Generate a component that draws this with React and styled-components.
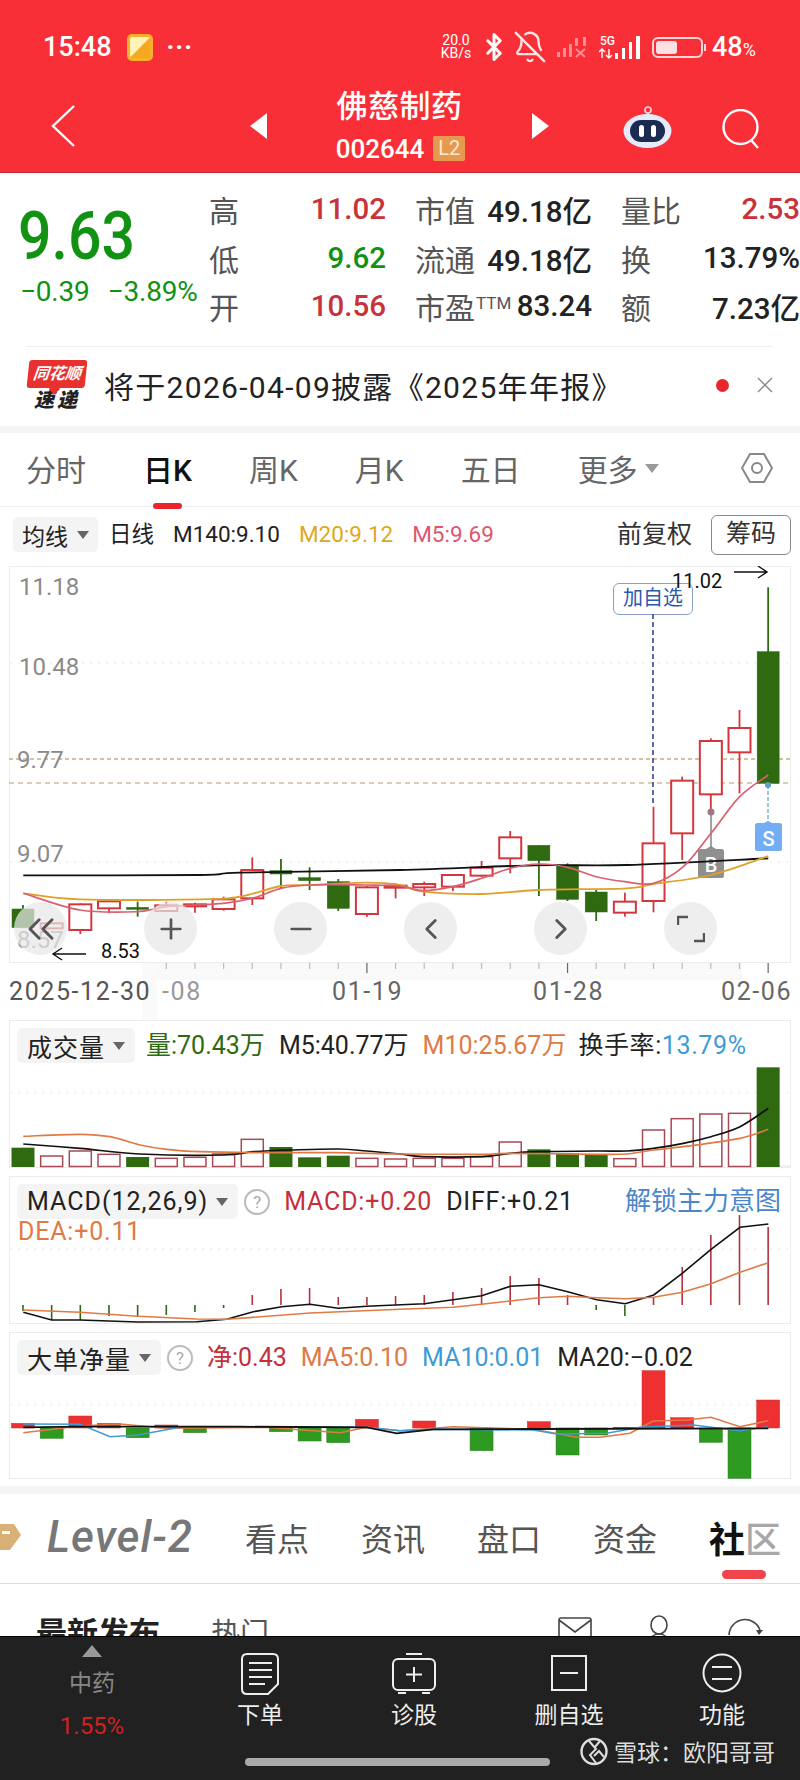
import React from "react";
import styled, { createGlobalStyle } from "styled-components";
import { Bluetooth, BellOff, Plus, Minus, ChevronLeft, ChevronRight, ChevronsLeft } from "lucide-react";

const Global = createGlobalStyle`
  html, body { margin: 0; padding: 0; background: #fff; }
  body { font-family: Roboto, "Noto Sans CJK SC", sans-serif; color: #222; }
`;

const Page = styled.div`
  position: relative;
  width: 800px;
  height: 1780px;
  overflow: hidden;
  display: flex;
  flex-direction: column;
`;

/* header */
const Header = styled.header`
  height: 173px;
  box-sizing: border-box;
  background: #f92f37;
  border-bottom: 1px solid #c9262d;
  color: #fff;
  flex: none;
`;
const StatusBar = styled.div`
  height: 80px;
  box-sizing: border-box;
  padding: 14px 42px 0 43px;
  display: flex;
  align-items: center;
  gap: 9px;
`;
const Clock = styled.span`
  font-size: 27px;
  font-weight: 500;
  margin-right: 6px;
`;
const AppIcon = styled.span`
  width: 26px;
  height: 27px;
  border-radius: 5px;
  background: linear-gradient(135deg, #fff3b8 0 48%, #f6a81e 52%);
  border: 3px solid #f8b02a;
  box-sizing: border-box;
`;
const MoreDots = styled.span`
  margin-left: 5px;
  font-size: 26px;
  font-weight: 700;
  letter-spacing: 1px;
  margin-right: auto;
`;
const NetSpeed = styled.span`
  width: 34px;
  font-size: 14px;
  line-height: 13px;
  text-align: center;
  margin-right: 2px;
`;
const BluetoothMark = styled(Bluetooth)`
  margin: 0 -5px;
`;
const Battery = styled.span`
  width: 51px;
  height: 21px;
  box-sizing: border-box;
  border: 2px solid #ffd6d8;
  border-radius: 6px;
  padding: 2px;
  display: flex;
  position: relative;
  &::after {
    content: "";
    position: absolute;
    right: -5px;
    top: 5px;
    width: 2px;
    height: 7px;
    background: #ffd6d8;
  }
`;
const BatteryFill = styled.span`
  width: 48%;
  background: #fde0e2;
  border-radius: 3px;
`;
const Percent = styled.span`
  font-size: 27px;
  font-weight: 500;
  width: 46px;
  white-space: nowrap;
  small { font-size: 18px; font-weight: 400; }
`;
const NavBar = styled.div`
  height: 92px;
  padding-left: 51px;
  display: flex;
  align-items: center;
`;
const Arrow = styled.span`
  width: 0;
  height: 0;
  border-top: 13px solid transparent;
  border-bottom: 13px solid transparent;
  border-${({ $dir }) => ($dir === "left" ? "right" : "left")}: 17px solid #fff;
  margin-left: ${({ $dir }) => ($dir === "left" ? "175px" : "0")};
`;
const TitleBlock = styled.div`
  width: 265px;
  display: flex;
  flex-direction: column;
  align-items: center;
  gap: 10px;
  margin-top: -3px;
`;
const StockName = styled.div`
  font-size: 31px;
  line-height: 38px;
  font-weight: 500;
  letter-spacing: 0.5px;
`;
const CodeRow = styled.div`
  display: flex;
  align-items: center;
  gap: 9px;
  font-size: 26px;
  font-weight: 500;
  line-height: 26px;
  margin-left: 2px;
`;
const Level = styled.span`
  width: 32px;
  height: 25px;
  background: #e59a50;
  border-radius: 2px;
  font-size: 20px;
  font-weight: 400;
  line-height: 25px;
  text-align: center;
  color: #ffe9cf;
`;
const Robot = styled.svg`
  width: 49px;
  height: 44px;
  margin-left: 74px;
`;
const SearchIcon = styled.svg`
  width: 40px;
  height: 40px;
  margin-left: 50px;
  margin-top: 6px;
`;

/* quote */
const Quote = styled.section`
  height: 173px;
  box-sizing: border-box;
  padding: 12px 0 0 20px;
  display: flex;
  flex: none;
`;
const PriceBlock = styled.div`
  width: 189px;
  padding-top: 21px;
`;
const BigPrice = styled.div`
  font-size: 59px;
  line-height: 62px;
  font-weight: 500;
  color: #119212;
  margin-left: -2px;
  transform: scaleY(1.12);
  transform-origin: left center;
`;
const Change = styled.div`
  margin-top: 11px;
  display: flex;
  gap: 18px;
  font-size: 28px;
  line-height: 26px;
  color: #119212;
  white-space: nowrap;
  letter-spacing: -0.2px;
`;
const StatGrid = styled.div`
  display: grid;
  grid-template-columns: 177px 177px 179px;
  grid-auto-rows: 48.5px;
  column-gap: 29px;
`;
const Stat = styled.div`
  display: flex;
  justify-content: space-between;
  align-items: center;
`;
const StatLabel = styled.span`
  font-size: 30px;
  color: #555;
  white-space: nowrap;
  sup { font-size: 17px; vertical-align: 10px; line-height: 0; margin-left: 1px; }
`;
const StatValue = styled.span`
  font-size: 29.5px;
  font-weight: 500;
  white-space: nowrap;
  color: ${({ $tone }) => ($tone === "up" ? "#c8323a" : $tone === "down" ? "#119212" : "#222")};
`;

/* news */
const News = styled.section`
  height: 80px;
  box-sizing: border-box;
  margin: 0 27px 0 26px;
  padding: 0 0 3px 2px;
  border-top: 1px solid #eeeeee;
  display: flex;
  align-items: center;
  flex: none;
`;
const NewsLogo = styled.div`
  width: 58px;
  display: flex;
  flex-direction: column;
  align-items: center;
`;
const LogoTag = styled.span`
  width: 58px;
  height: 28px;
  background: #e8312e;
  border-radius: 3px;
  transform: skewX(-6deg);
  color: #fff;
  font-size: 16px;
  line-height: 28px;
  font-weight: 700;
  font-style: italic;
  text-align: center;
  white-space: nowrap;
  position: relative;
  &::after {
    content: "";
    position: absolute;
    left: 24px;
    bottom: -5px;
    width: 8px;
    height: 8px;
    background: #e8312e;
    transform: rotate(45deg);
  }
`;
const LogoSub = styled.span`
  margin-top: 1px;
  font-size: 20px;
  line-height: 22px;
  font-weight: 900;
  font-style: italic;
  color: #222;
  letter-spacing: 3px;
`;
const NewsText = styled.span`
  margin-left: 18px;
  font-size: 30px;
  white-space: nowrap;
  color: #222;
  letter-spacing: 1.3px;
`;
const RedDot = styled.span`
  margin-left: auto;
  width: 13px;
  height: 13px;
  border-radius: 50%;
  background: #e8262e;
`;
const CloseMark = styled.svg`
  width: 16px;
  height: 16px;
  margin-left: 28px;
`;
const GreyGap = styled.div`
  flex: none;
  height: ${({ $h }) => $h}px;
  margin-top: ${({ $mt = 0 }) => $mt}px;
  background: #f5f5f5;
`;

/* period tabs */
const Periods = styled.nav`
  flex: none;
  height: 74px;
  box-sizing: border-box;
  padding: 0 27px 3px 26px;
  border-bottom: 1px solid #eeeeee;
  display: flex;
  align-items: center;
  gap: 57px;
`;
const Period = styled.span`
  position: relative;
  display: flex;
  align-items: center;
  gap: 7px;
  font-size: 30px;
  white-space: nowrap;
  color: ${({ $active }) => ($active ? "#111" : "#666")};
  font-weight: ${({ $active }) => ($active ? 500 : 400)};
  &::after {
    content: "";
    display: ${({ $active }) => ($active ? "block" : "none")};
    position: absolute;
    left: 10px;
    right: 10px;
    bottom: -19px;
    height: 6px;
    border-radius: 3px;
    background: #e8262e;
  }
`;
const Tri = styled.span`
  display: inline-block;
  width: 0;
  height: 0;
  border-left: ${({ $w = 6 }) => $w}px solid transparent;
  border-right: ${({ $w = 6 }) => $w}px solid transparent;
  border-top: ${({ $w = 6 }) => $w + 2}px solid ${({ $c = "#666" }) => $c};
  flex: none;
`;
const HexIcon = styled.svg`
  width: 32px;
  height: 32px;
  margin-left: auto;
`;

/* k-line */
const LegendRow = styled.div`
  flex: none;
  height: 59px;
  box-sizing: border-box;
  padding: 10px 9px 0 13px;
  display: flex;
  align-items: flex-start;
  gap: 19px;
`;
const Chip = styled.span`
  display: inline-flex;
  align-items: center;
  gap: ${({ $small }) => ($small ? 9 : 8)}px;
  height: 35px;
  padding: 0 ${({ $small }) => ($small ? 9 : 10)}px;
  box-sizing: border-box;
  background: #f5f4f4;
  border-radius: 5px;
  font-size: ${({ $small }) => ($small ? 23 : 25)}px;
  letter-spacing: ${({ $small }) => ($small ? 0 : 1)}px;
  color: #222;
  white-space: nowrap;
  flex: none;
`;
const Item = styled.span`
  font-size: 22.5px;
  line-height: 35px;
  color: ${({ $c = "#222" }) => $c};
  white-space: nowrap;
  margin-left: ${({ $ml = 0 }) => $ml}px;
`;
const Adjust = styled.span`
  margin-left: auto;
  font-size: 25px;
  line-height: 35px;
  color: #333;
`;
const ChipsButton = styled.span`
  width: 80px;
  height: 40px;
  margin-top: -2px;
  box-sizing: border-box;
  border: 1px solid #888;
  border-radius: 6px;
  font-size: 25px;
  line-height: 36px;
  text-align: center;
  color: #333;
`;
const ChartFrame = styled.div`
  flex: none;
  position: relative;
  box-sizing: border-box;
  margin: ${({ $mt = 0 }) => $mt}px 9px 0;
  width: 782px;
  height: ${({ $h }) => $h}px;
  border: 1px solid #ececec;
`;
const ChartLayer = styled.div`
  position: absolute;
  left: -1px;
  top: -1px;
`;
const AddTag = styled.span`
  position: absolute;
  left: 603px;
  top: 16px;
  width: 80px;
  height: 32px;
  box-sizing: border-box;
  background: #fff;
  border: 1px solid #8ba0c8;
  border-radius: 6px;
  font-size: 20px;
  line-height: 29px;
  text-align: center;
  color: #2a5ab0;
`;
const ToolRow = styled.div`
  position: absolute;
  left: 4px;
  top: 335px;
  display: flex;
  gap: 77px;
`;
const RoundTool = styled.span`
  width: 53px;
  height: 53px;
  border-radius: 50%;
  background: rgba(232, 232, 232, 0.72);
  display: flex;
  align-items: center;
  justify-content: center;
  color: #555;
`;
const AxisRow = styled.svg`
  flex: none;
  display: block;
`;
const PanelHead = styled.div`
  position: relative;
  display: flex;
  align-items: center;
  gap: 14px;
  padding: 7px 9px 0 7px;
`;
const Help = styled.span`
  width: 26px;
  height: 26px;
  box-sizing: border-box;
  border: 2px solid #bbb;
  border-radius: 50%;
  font-size: 17px;
  line-height: 22px;
  text-align: center;
  color: #aaa;
  flex: none;
  margin-left: -8px;
`;
const PanelItem = styled.span`
  font-size: 25px;
  line-height: 35px;
  white-space: nowrap;
  letter-spacing: ${({ $ls = 0 }) => $ls}px;
  color: ${({ $c = "#222" }) => $c};
  margin-left: ${({ $ml = 0 }) => $ml}px;
`;
const Accent = styled.span`
  color: #3d9bd8;
`;
const UnlockLink = styled.span`
  margin-left: auto;
  font-size: 26px;
  line-height: 35px;
  white-space: nowrap;
  color: #4a86c8;
`;
const SecondLine = styled.div`
  position: relative;
  padding-left: 8px;
  font-size: 25px;
  line-height: 26px;
  letter-spacing: 0.8px;
  color: #e07a45;
`;

/* info tabs */
const InfoTabs = styled.nav`
  flex: none;
  height: 90px;
  box-sizing: border-box;
  border-bottom: 1px solid #ddd;
  display: flex;
  align-items: center;
  gap: 52px;
  padding-bottom: 3px;
`;
const Gem = styled.svg`
  width: 21px;
  height: 26px;
  margin-right: -26px;
  flex: none;
`;
const LevelLogo = styled.span`
  font-size: 44px;
  line-height: 50px;
  font-style: italic;
  font-weight: 500;
  color: #777;
  white-space: nowrap;
  letter-spacing: 1px;
`;
const InfoTab = styled.span`
  font-size: 32px;
  color: #555;
  white-space: nowrap;
`;
const InfoActive = styled.span`
  position: relative;
  font-size: 36px;
  font-weight: 700;
  color: #111;
  white-space: nowrap;
  em { font-style: normal; font-weight: 500; color: #a8a8a8; }
  &::after {
    content: "";
    position: absolute;
    left: 13px;
    width: 44px;
    height: 9px;
    bottom: -16px;
    border-radius: 5px;
    background: #f0454c;
  }
`;
const Feed = styled.div`
  flex: none;
  height: 52px;
  overflow: hidden;
  padding: 32px 37px 0 36px;
  box-sizing: border-box;
  display: flex;
  align-items: flex-start;
`;
const FeedMain = styled.span`
  font-size: 31px;
  font-weight: 700;
  line-height: 36px;
  color: #222;
  white-space: nowrap;
`;
const FeedChevron = styled.svg`
  width: 16px;
  height: 10px;
  margin: 20px 0 0 7px;
  flex: none;
`;
const FeedSub = styled.span`
  font-size: 29px;
  line-height: 36px;
  color: #555;
  margin-left: 28px;
  margin-right: auto;
`;
const FeedIcon = styled.svg`
  width: ${({ $w }) => $w}px;
  height: 36px;
  margin-left: ${({ $ml }) => $ml}px;
  margin-top: ${({ $mt = 0 }) => $mt}px;
  flex: none;
`;

/* bottom bar */
const Dock = styled.footer`
  position: relative;
  flex: 1;
  background: #212121;
  border-top: 1px solid #000;
  box-sizing: border-box;
  display: grid;
  grid-template-columns: 184px 152px 156px 154px 152px;
  align-items: start;
`;
const SectorCell = styled.div`
  display: flex;
  flex-direction: column;
  align-items: center;
  padding-top: 8px;
`;
const UpTri = styled.span`
  width: 0;
  height: 0;
  border-left: 10px solid transparent;
  border-right: 10px solid transparent;
  border-bottom: 12px solid #999;
`;
const SectorName = styled.span`
  margin-top: 13px;
  font-size: 23px;
  line-height: 28px;
  color: #888;
`;
const SectorPct = styled.span`
  margin-top: 14px;
  font-size: 24px;
  line-height: 28px;
  color: #d02020;
`;
const DockItem = styled.div`
  display: flex;
  flex-direction: column;
  align-items: center;
  padding-top: 16px;
  color: #eee;
`;
const DockLabel = styled.span`
  margin-top: 8px;
  font-size: 23px;
  line-height: 26px;
  color: #eee;
  white-space: nowrap;
`;
const HomeBar = styled.span`
  position: absolute;
  left: 245px;
  bottom: 14px;
  width: 305px;
  height: 8px;
  border-radius: 4px;
  background: #aaa;
`;
const Watermark = styled.div`
  position: absolute;
  left: 580px;
  bottom: 12px;
  display: flex;
  align-items: center;
  gap: 6px;
  font-size: 23px;
  color: #ddd;
  white-space: nowrap;
`;

/* data: coordinates were read off the reference, in page pixels */
const cx = (i) => 23 + i * 28.66;
const zy = (z) => 510 + z / 3;

const candles = [
  ["g", 1185, 1197, 1253, 1253], ["r", 1240, 1240, 1255, 1255], ["r", 1180, 1183, 1260, 1272],
  ["r", 1168, 1174, 1195, 1210], ["g", 1175, 1192, 1198, 1220], ["r", 1175, 1186, 1203, 1205],
  ["r", 1178, 1183, 1187, 1208], ["r", 1160, 1168, 1197, 1202], ["r", 1042, 1080, 1165, 1185],
  ["g", 1047, 1082, 1092, 1135], ["g", 1072, 1103, 1112, 1140], ["g", 1107, 1115, 1195, 1203],
  ["r", 1128, 1132, 1212, 1220], ["r", 1120, 1127, 1133, 1165], ["r", 1115, 1122, 1132, 1158],
  ["r", 1095, 1095, 1130, 1143], ["r", 1053, 1073, 1097, 1100], ["r", 963, 982, 1045, 1090],
  ["g", 1006, 1006, 1052, 1158], ["g", 1060, 1068, 1168, 1173], ["g", 1140, 1146, 1206, 1233],
  ["r", 1148, 1175, 1208, 1220], ["r", 890, 1000, 1173, 1207], ["r", 800, 812, 970, 1050],
  ["r", 685, 693, 853, 900], ["r", 600, 654, 727, 850], ["g", 232, 425, 820, 820],
];

const L = (list) => list.map(([x, z]) => [x / 3, zy(z)]);
const R = (list) => list.map(([x, z]) => [400 + x / 3, zy(z)]);

const m140 = [...L([[70, 1096], [600, 1095], [720, 1088], [1200, 1080]]), ...R([[400, 1066], [680, 1065], [1105, 1045]])];
const m20 = [
  ...L([[70, 1150], [240, 1168], [600, 1168], [720, 1160], [843, 1128], [929, 1125], [1100, 1118]]),
  ...R([[0, 1125], [70, 1145], [245, 1152], [417, 1140], [680, 1135], [760, 1122], [933, 1095], [1105, 1038]]),
];
const m5 = [
  ...L([[70, 1150], [240, 1200], [413, 1205], [500, 1190], [671, 1180], [757, 1165], [843, 1135], [929, 1125], [1100, 1125]]),
  ...R([[0, 1128], [70, 1142], [159, 1130], [245, 1105], [331, 1075], [417, 1062], [503, 1072], [589, 1100], [675, 1115], [761, 1120], [850, 1070], [933, 970], [1019, 860], [1105, 795]]),
];

const volume = [
  ["g", 413], ["r", 438], ["r", 423], ["r", 433], ["g", 441], ["r", 445], ["r", 442], ["r", 432], ["r", 388],
  ["g", 411], ["g", 442], ["g", 437], ["r", 445], ["r", 447], ["r", 445], ["r", 445], ["r", 440], ["r", 396],
  ["g", 418], ["g", 430], ["g", 432], ["r", 446], ["r", 360], ["r", 326], ["r", 312], ["r", 310], ["g", 172],
];
const vol = (off, list) => list.map(([x, z]) => [off + x / 3, 1010 + z / 3]);
const volBlack = [
  ...vol(0, [[70, 402], [240, 415], [420, 432], [670, 435], [760, 425], [870, 420], [1015, 417], [1100, 423]]),
  ...vol(400, [[0, 432], [70, 440], [245, 440], [330, 430], [417, 425], [590, 423], [680, 423], [760, 415], [850, 400], [933, 380], [1020, 350], [1105, 295]]),
];
const volOrange = [
  ...vol(0, [[70, 379], [240, 373], [330, 380], [420, 405], [500, 418], [600, 425], [760, 428], [1000, 428]]),
  ...vol(400, [[0, 432], [245, 433], [330, 430], [590, 433], [680, 432], [760, 420], [850, 410], [1020, 385], [1105, 358]]),
];

const macdTops = [
  1311, 1320, 1320, 1316, 1317, 1315, 1312, 1308, 1295, 1289, 1288, 1297, 1297, 1296, 1295, 1292, 1288, 1276,
  1278, 1295, 1310, 1316, 1297, 1267, 1235, 1215, 1227,
];
const macd = (list, off, base) => list.map(([x, z]) => [off + x / 3, base + z / 3]);
const diffLine = [
  ...macd([[70, 217], [155, 240], [240, 240], [413, 246], [590, 245], [680, 238], [760, 215], [845, 200], [930, 193], [1015, 205], [1100, 199]], 0, 1240),
  ...macd([[73, 281], [159, 269], [245, 257], [331, 229], [417, 224], [503, 245], [590, 269], [676, 281], [761, 255], [847, 190], [933, 118], [1020, 52], [1105, 42]], 400, 1210),
];
const deaLine = [
  ...macd([[70, 210], [240, 217], [413, 229], [590, 237], [680, 238], [930, 219]], 0, 1240),
  ...macd([[0, 298], [159, 292], [245, 283], [331, 273], [417, 263], [503, 259], [590, 263], [676, 266], [761, 262], [847, 247], [933, 221], [1020, 187], [1105, 158]], 400, 1210),
];

const flow = [
  ["r", 340], ["g", 385], ["r", 318], ["r", 340], ["g", 383], ["r", 345], ["g", 368], null, null, ["g", 365], ["g", 393], ["g", 398],
  ["r", 328], null, ["r", 333], null, ["g", 422], null, ["r", 335], ["g", 435], ["g", 375], ["r", 352], ["r", 182], ["r", 323], ["g", 397], ["g", 505], ["r", 270],
];
const fy = (z) => 1310 + z / 3;
const fl = (off, list) => list.map(([x, z]) => [off + x / 3, fy(z)]);
const flowBlack = [...fl(0, [[70, 352], [240, 350], [720, 350], [1100, 352], [1190, 370]]), ...fl(400, [[100, 358], [400, 357], [1105, 355]])];
const flowBlue = [
  ...fl(0, [[70, 342], [240, 343], [330, 380], [413, 375], [540, 352], [800, 350], [1100, 352]]),
  ...fl(400, [[0, 362], [100, 358], [400, 360], [470, 372], [620, 370], [720, 352], [880, 345], [1020, 362], [1105, 350]]),
];
const flowOrange = [
  ...fl(0, [[70, 368], [240, 348], [360, 342], [500, 355], [800, 352], [1020, 368], [1100, 352]]),
  ...fl(400, [[0, 362], [100, 355], [160, 350], [400, 358], [530, 382], [600, 382], [690, 370], [760, 333], [860, 330], [933, 322], [1020, 350], [1105, 332]]),
];

const poly = (pts) => pts.map(([x, y]) => `${x.toFixed(1)},${y.toFixed(1)}`).join(" ");
const smooth = (pts) => {
  let d = `M${pts[0][0].toFixed(1)} ${pts[0][1].toFixed(1)}`;
  for (let i = 0; i < pts.length - 1; i++) {
    const p0 = pts[i - 1] || pts[i];
    const p1 = pts[i];
    const p2 = pts[i + 1];
    const p3 = pts[i + 2] || p2;
    const c1 = [p1[0] + (p2[0] - p0[0]) / 6, p1[1] + (p2[1] - p0[1]) / 6];
    const c2 = [p2[0] - (p3[0] - p1[0]) / 6, p2[1] - (p3[1] - p1[1]) / 6];
    d += `C${c1[0].toFixed(1)} ${c1[1].toFixed(1)} ${c2[0].toFixed(1)} ${c2[1].toFixed(1)} ${p2[0].toFixed(1)} ${p2[1].toFixed(1)}`;
  }
  return d;
};

const GREEN = "#2f6a10";
const RED = "#d3363c";

const Curve = ({ pts, c, w = 1.7 }) => <path d={smooth(pts)} fill="none" stroke={c} strokeWidth={w} strokeLinejoin="round" />;
const Grid = ({ y, x2 = 790 }) => <line x1="10" x2={x2} y1={y} y2={y} stroke="#e6e6e6" strokeDasharray="2 6" />;

const MainChart = () => (
  <svg viewBox="9 566 782 397" width="782" height="397">
    <Grid y={663} />
    <Grid y={862} />
    <line x1="9" x2="790" y1="759" y2="759" stroke="#a8863e" strokeDasharray="4 3" />
    <line x1="9" x2="790" y1="783" y2="783" stroke="#b89a60" strokeDasharray="5 4" />
    <line x1="653" x2="653" y1="614" y2="806" stroke="#33488c" strokeWidth="1.6" strokeDasharray="5 3" />
    {candles.map(([k, wt, bt, bb, wb], i) => {
      const x = cx(i);
      const c = k === "g" ? GREEN : RED;
      return (
        <g key={i}>
          <line x1={x} x2={x} y1={zy(wt)} y2={zy(wb)} stroke={c} strokeWidth="1.8" />
          <rect
            x={x - 11}
            y={zy(bt)}
            width="22"
            height={Math.max(zy(bb) - zy(bt), 2)}
            fill={k === "g" ? GREEN : "#fff"}
            stroke={c}
            strokeWidth={k === "g" ? 0.5 : 2}
          />
        </g>
      );
    })}
    <line x1="711" x2="711" y1="812" y2="850" stroke="#8a8a8a" strokeWidth="1.6" />
    <circle cx="711" cy="812" r="3.5" fill="#9a7a80" />
    <path d="M698 851q0-2 3-2h5l5-3 5 3h5q3 0 3 2v25q0 2-3 2h-20q-3 0-3-2z" fill="#8f8f8f" />
    <text x="711" y="872" textAnchor="middle" fontSize="20" fontWeight="500" fill="#fff">B</text>
    <Curve pts={m140} c="#111" w={1.8} />
    <Curve pts={m20} c="#e0a02c" w={1.8} />
    <Curve pts={m5} c="#d9606f" w={1.7} />
    <line x1="768" x2="768" y1="785" y2="822" stroke="#3d8fb0" strokeWidth="1" strokeDasharray="4 2" />
    <circle cx="768" cy="785" r="3" fill="#5aa0d0" />
    <path d="M755 825q0-2 3-2h6l4-2 4 2h7q3 0 3 2v24q0 2-3 2h-21q-3 0-3-2z" fill="#73aef5" />
    <text x="768.5" y="846" textAnchor="middle" fontSize="20" fontWeight="500" fill="#fff">S</text>
    <g fontSize="24" fill="#8a8a8a">
      <text x="19" y="595">11.18</text>
      <text x="19" y="675">10.48</text>
      <text x="17" y="768">9.77</text>
      <text x="17" y="862">9.07</text>
      <text x="17" y="948">8.57</text>
    </g>
    <g fontSize="20" fill="#111">
      <text x="101" y="958">8.53</text>
      <text x="672" y="588">11.02</text>
    </g>
    <path d="M86 954H53m9-6-9 6 9 6" fill="none" stroke="#111" strokeWidth="1.4" />
    <path d="M734 572h33m-9-6 9 6-9 6" fill="none" stroke="#111" strokeWidth="1.4" />
  </svg>
);

const VolumeChart = () => (
  <svg viewBox="9 1020 782 148" width="782" height="148">
    <Grid y={1093} />
    <line x1="770" x2="790" y1="1166" y2="1166" stroke="#e4e4e4" />
    {volume.map(([k, z], i) => {
      const top = 1010 + z / 3;
      return k === "g" ? (
        <rect key={i} x={cx(i) - 11.5} y={top} width="23" height={1167 - top} fill={GREEN} />
      ) : (
        <rect key={i} x={cx(i) - 11} y={top} width="22" height={1166.5 - top} fill="#fff" stroke="#a84a55" strokeWidth="1.5" />
      );
    })}
    <Curve pts={volBlack} c="#111" />
    <Curve pts={volOrange} c="#e07a45" />
  </svg>
);

const MacdChart = () => (
  <svg viewBox="9 1176 782 148" width="782" height="148">
    <Grid y={1249} />
    {macdTops.map((t, i) => (
      <line key={i} x1={cx(i)} x2={cx(i)} y1={t} y2="1305" stroke={t > 1305 ? GREEN : "#b4323e"} strokeWidth="1.6" />
    ))}
    <polyline points={poly(diffLine)} fill="none" stroke="#111" strokeWidth="1.6" />
    <polyline points={poly(deaLine)} fill="none" stroke="#e07a45" strokeWidth="1.6" />
  </svg>
);

const FlowChart = () => (
  <svg viewBox="9 1332 782 147" width="782" height="147">
    <Grid y={1405} />
    {flow.map((b, i) => {
      if (!b) return null;
      const y = fy(b[1]);
      const top = Math.min(y, 1428);
      const h = Math.abs(y - 1428);
      return <rect key={i} x={cx(i) - 11.5} y={top} width="23" height={h} fill={b[0] === "r" ? "#ee3030" : "#2f9a20"} stroke={b[0] === "r" ? "#c03030" : "#2a7a20"} strokeWidth="0.5" />;
    })}
    <polyline points={poly(flowOrange)} fill="none" stroke="#e07a45" strokeWidth="1.6" />
    <polyline points={poly(flowBlue)} fill="none" stroke="#3d9bd8" strokeWidth="1.6" />
    <polyline points={poly(flowBlack)} fill="none" stroke="#111" strokeWidth="1.8" />
  </svg>
);

const ticks = Array.from({ length: 22 }, (_, i) => i + 5);
const longTicks = [12, 19, 26];

const App = () => (
  <Page>
    <Global />
    <Header>
      <StatusBar>
        <Clock>15:48</Clock>
        <AppIcon />
        <MoreDots>···</MoreDots>
        <NetSpeed>20.0<br />KB/s</NetSpeed>
        <BluetoothMark size={30} strokeWidth={2.4} />
        <BellOff size={34} strokeWidth={1.7} color="#ffe4e5" />
        <svg width="34" height="24" viewBox="0 0 34 24">
          <g fill="#ff8f94">
            <rect x="1" y="17" width="3" height="5" />
            <rect x="7" y="13" width="3" height="9" />
            <rect x="13" y="9" width="3" height="13" />
            <rect x="19" y="3" width="3" height="8" />
          </g>
          <path d="M20 14l9 8m0-8l-9 8" stroke="#ff8f94" strokeWidth="2" />
          <rect x="27" y="2" width="3" height="9" fill="#ff8f94" />
        </svg>
        <svg width="44" height="28" viewBox="0 0 44 28">
          <text x="1" y="12" fontSize="12" fontWeight="500" fill="#fff">5G</text>
          <path d="M3 16v9M0 19l3-3 3 3M10 25v-9M7 22l3 3 3-3" fill="none" stroke="#fff" strokeWidth="1.4" />
          <g fill="#fff">
            <rect x="16" y="20" width="3" height="6" />
            <rect x="23" y="15" width="3" height="11" />
            <rect x="30" y="9" width="3" height="17" />
            <rect x="37" y="3" width="4" height="23" />
          </g>
        </svg>
        <Battery><BatteryFill /></Battery>
        <Percent>48<small>%</small></Percent>
      </StatusBar>
      <NavBar>
        <svg width="24" height="42" viewBox="0 0 24 42">
          <path d="M23 1L2 21l21 20" fill="none" stroke="#fff" strokeWidth="2.4" />
        </svg>
        <Arrow $dir="left" />
        <TitleBlock>
          <StockName>佛慈制药</StockName>
          <CodeRow>002644<Level>L2</Level></CodeRow>
        </TitleBlock>
        <Arrow $dir="right" />
        <Robot viewBox="0 0 49 44">
          <circle cx="25" cy="6" r="3" fill="none" stroke="#f4d9e0" strokeWidth="1.6" />
          <path d="M25 9v4" stroke="#f4d9e0" strokeWidth="2" />
          <ellipse cx="24.5" cy="27" rx="24" ry="17" fill="#e6ebfa" />
          <rect x="7" y="16" width="35" height="22" rx="11" fill="#1b2b52" />
          <rect x="16" y="21" width="5" height="12" rx="2.5" fill="#fff" />
          <rect x="28" y="21" width="5" height="12" rx="2.5" fill="#fff" />
        </Robot>
        <SearchIcon viewBox="0 0 40 40">
          <circle cx="18.5" cy="18" r="17" fill="none" stroke="#fff" strokeWidth="2.4" />
          <path d="M29 31l7 8" stroke="#fff" strokeWidth="2.4" />
        </SearchIcon>
      </NavBar>
    </Header>

    <Quote>
      <PriceBlock>
        <BigPrice>9.63</BigPrice>
        <Change><span>−0.39</span><span>−3.89%</span></Change>
      </PriceBlock>
      <StatGrid>
        <Stat><StatLabel>高</StatLabel><StatValue $tone="up">11.02</StatValue></Stat>
        <Stat><StatLabel>市值</StatLabel><StatValue>49.18亿</StatValue></Stat>
        <Stat><StatLabel>量比</StatLabel><StatValue $tone="up">2.53</StatValue></Stat>
        <Stat><StatLabel>低</StatLabel><StatValue $tone="down">9.62</StatValue></Stat>
        <Stat><StatLabel>流通</StatLabel><StatValue>49.18亿</StatValue></Stat>
        <Stat><StatLabel>换</StatLabel><StatValue>13.79%</StatValue></Stat>
        <Stat><StatLabel>开</StatLabel><StatValue $tone="up">10.56</StatValue></Stat>
        <Stat><StatLabel>市盈<sup>TTM</sup></StatLabel><StatValue>83.24</StatValue></Stat>
        <Stat><StatLabel>额</StatLabel><StatValue>7.23亿</StatValue></Stat>
      </StatGrid>
    </Quote>

    <News>
      <NewsLogo>
        <LogoTag>同花顺</LogoTag>
        <LogoSub>速递</LogoSub>
      </NewsLogo>
      <NewsText>将于2026-04-09披露《2025年年报》</NewsText>
      <RedDot />
      <CloseMark viewBox="0 0 16 16">
        <path d="M1 1l14 14M15 1L1 15" stroke="#888" strokeWidth="1.4" />
      </CloseMark>
    </News>
    <GreyGap $h={7} />

    <Periods>
      <Period>分时</Period>
      <Period $active>日K</Period>
      <Period>周K</Period>
      <Period>月K</Period>
      <Period>五日</Period>
      <Period>更多<Tri $w={7} $c="#999" /></Period>
      <HexIcon viewBox="0 0 32 32">
        <path d="M9 2h14l8 14-8 14H9L1 16z" fill="none" stroke="#888" strokeWidth="2" />
        <circle cx="16" cy="16" r="5" fill="none" stroke="#888" strokeWidth="2" />
      </HexIcon>
    </Periods>

    <LegendRow>
      <Chip $small>均线<Tri /></Chip>
      <Item $ml={-8}>日线</Item>
      <Item>M140:9.10</Item>
      <Item $c="#e0a820">M20:9.12</Item>
      <Item $c="#e0566c">M5:9.69</Item>
      <Adjust>前复权</Adjust>
      <ChipsButton>筹码</ChipsButton>
    </LegendRow>

    <ChartFrame $h={397}>
      <AddTag>加自选</AddTag>
      <ChartLayer><MainChart /></ChartLayer>
      <ToolRow>
        <RoundTool><ChevronsLeft size={44} strokeWidth={1.6} /></RoundTool>
        <RoundTool><Plus size={32} strokeWidth={2} /></RoundTool>
        <RoundTool><Minus size={32} strokeWidth={2} /></RoundTool>
        <RoundTool><ChevronLeft size={34} strokeWidth={2} /></RoundTool>
        <RoundTool><ChevronRight size={34} strokeWidth={2} /></RoundTool>
        <RoundTool>
          <svg width="28" height="28" viewBox="0 0 28 28">
            <path d="M1 10V2h10M27 18v8H17" fill="none" stroke="#555" strokeWidth="2.4" />
          </svg>
        </RoundTool>
      </ToolRow>
    </ChartFrame>

    <AxisRow viewBox="0 963 800 57" width="800" height="57">
      <rect x="142" y="963" width="600" height="17" fill="#f9f9f9" />
      <rect x="142" y="963" width="15" height="57" fill="#fafafa" />
      {ticks.map((i) => (
        <line
          key={i}
          x1={cx(i)}
          x2={cx(i)}
          y1="963"
          y2={longTicks.includes(i) ? 973 : 969}
          stroke={longTicks.includes(i) ? "#666" : "#bbb"}
          strokeWidth="1.2"
        />
      ))}
      <g fontSize="25" fill="#555" letterSpacing="1.6">
        <text x="9" y="1000">2025-12-30</text>
        <text x="162" y="1000" fill="#999">-08</text>
        <text x="332" y="1000" fill="#666">01-19</text>
        <text x="533" y="1000" fill="#666">01-28</text>
        <text x="721" y="1000" fill="#666">02-06</text>
      </g>
    </AxisRow>

    <ChartFrame $h={148}>
      <ChartLayer><VolumeChart /></ChartLayer>
      <PanelHead>
        <Chip>成交量<Tri /></Chip>
        <PanelItem $c="#2e6a10" $ml={-3}>量:70.43万</PanelItem>
        <PanelItem>M5:40.77万</PanelItem>
        <PanelItem $c="#e07a45">M10:25.67万</PanelItem>
        <PanelItem $ml={-2} $ls={0.6}>换手率:<Accent>13.79%</Accent></PanelItem>
      </PanelHead>
    </ChartFrame>

    <ChartFrame $h={148} $mt={8}>
      <ChartLayer><MacdChart /></ChartLayer>
      <PanelHead>
        <Chip>MACD(12,26,9)<Tri /></Chip>
        <Help>?</Help>
        <PanelItem $c="#c4303a" $ls={0.8}>MACD:+0.20</PanelItem>
        <PanelItem $ls={0.8}>DIFF:+0.21</PanelItem>
        <UnlockLink>解锁主力意图</UnlockLink>
      </PanelHead>
      <SecondLine>DEA:+0.11</SecondLine>
    </ChartFrame>

    <ChartFrame $h={147} $mt={8}>
      <ChartLayer><FlowChart /></ChartLayer>
      <PanelHead>
        <Chip>大单净量<Tri /></Chip>
        <Help>?</Help>
        <PanelItem $c="#c4303a">净:0.43</PanelItem>
        <PanelItem $c="#e07a45">MA5:0.10</PanelItem>
        <PanelItem $c="#3d9bd8">MA10:0.01</PanelItem>
        <PanelItem>MA20:−0.02</PanelItem>
      </PanelHead>
    </ChartFrame>
    <GreyGap $h={8} $mt={7} />

    <InfoTabs>
      <Gem viewBox="0 0 21 26">
        <path d="M0 0h14l7 11-11 15H0z" fill="#d9b177" />
        <rect x="2" y="7" width="8" height="3" fill="#fff" />
      </Gem>
      <LevelLogo>Level-2</LevelLogo>
      <InfoTab>看点</InfoTab>
      <InfoTab>资讯</InfoTab>
      <InfoTab>盘口</InfoTab>
      <InfoTab>资金</InfoTab>
      <InfoActive>社<em>区</em></InfoActive>
    </InfoTabs>

    <Feed>
      <FeedMain>最新发布</FeedMain>
      <FeedChevron viewBox="0 0 16 10">
        <path d="M1 1l7 7 7-7" fill="none" stroke="#444" strokeWidth="1.5" />
      </FeedChevron>
      <FeedSub>热门</FeedSub>
      <FeedIcon $w={34} $ml={0} viewBox="0 0 34 36">
        <rect x="1" y="2" width="32" height="30" rx="2" fill="none" stroke="#444" strokeWidth="1.6" />
        <path d="M1 4l16 12L33 4" fill="none" stroke="#444" strokeWidth="1.6" />
      </FeedIcon>
      <FeedIcon $w={22} $ml={56} $mt={-1} viewBox="0 0 22 36">
        <ellipse cx="11" cy="10" rx="8" ry="9" fill="none" stroke="#444" strokeWidth="1.6" />
        <path d="M1 30c0-8 5-11 10-11s10 3 10 11" fill="none" stroke="#444" strokeWidth="1.6" />
      </FeedIcon>
      <FeedIcon $w={36} $ml={57} $mt={-1} viewBox="0 0 36 36">
        <path d="M2 20a16 16 0 0 1 31-5" fill="none" stroke="#444" strokeWidth="1.6" />
        <path d="M29 15h7l-4 5z" fill="#444" />
      </FeedIcon>
    </Feed>

    <Dock>
      <SectorCell>
        <UpTri />
        <SectorName>中药</SectorName>
        <SectorPct>1.55%</SectorPct>
      </SectorCell>
      <DockItem>
        <svg width="38" height="42" viewBox="0 0 38 42">
          <path d="M6 1h26q5 0 5 5v25l-10 10H6q-5 0-5-5V6q0-5 5-5z" fill="none" stroke="#eee" strokeWidth="2" />
          <path d="M8 10h23M8 17h23M8 24h23M8 31h16" stroke="#eee" strokeWidth="2" />
        </svg>
        <DockLabel>下单</DockLabel>
      </DockItem>
      <DockItem>
        <svg width="44" height="42" viewBox="0 0 44 42">
          <path d="M14 1h16" stroke="#eee" strokeWidth="2" />
          <rect x="1" y="6" width="42" height="31" rx="5" fill="none" stroke="#eee" strokeWidth="2" />
          <path d="M22 14v15M14 21.5h16M6 40h8M30 40h8" stroke="#eee" strokeWidth="2" />
        </svg>
        <DockLabel>诊股</DockLabel>
      </DockItem>
      <DockItem>
        <svg width="36" height="42" viewBox="0 0 36 42">
          <rect x="1" y="3" width="34" height="34" fill="none" stroke="#eee" strokeWidth="2" />
          <path d="M9 20h18" stroke="#eee" strokeWidth="2" />
        </svg>
        <DockLabel>删自选</DockLabel>
      </DockItem>
      <DockItem>
        <svg width="40" height="42" viewBox="0 0 40 42">
          <circle cx="20" cy="20" r="18.5" fill="none" stroke="#eee" strokeWidth="2" />
          <path d="M10 14h20M10 26h20" stroke="#eee" strokeWidth="2" />
        </svg>
        <DockLabel>功能</DockLabel>
      </DockItem>
      <HomeBar />
      <Watermark>
        <svg width="28" height="29" viewBox="0 0 28 29">
          <circle cx="14" cy="14.5" r="12.5" fill="none" stroke="#ddd" strokeWidth="2.4" />
          <path d="M9 4l7 8-6 6 6 8M20 4l-5 6M14 19l5-5 5 6" fill="none" stroke="#ddd" strokeWidth="2" />
        </svg>
        雪球：欧阳哥哥
      </Watermark>
    </Dock>
  </Page>
);

export default App;
